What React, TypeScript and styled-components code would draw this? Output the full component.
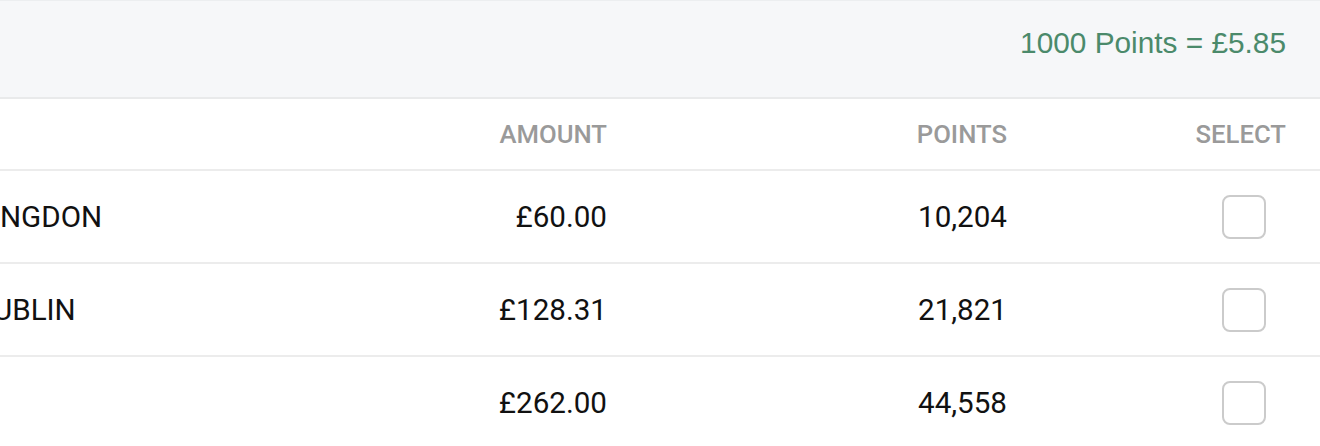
import React from "react";
import styled, { createGlobalStyle } from "styled-components";

const Global = createGlobalStyle`
  html, body { margin: 0; padding: 0; background: #ffffff; }
  body { font-family: Roboto, "Liberation Sans", sans-serif; -webkit-font-smoothing: antialiased; }
`;

const Page = styled.div`
  width: 1320px;
  overflow: hidden;
`;

const RateBar = styled.div`
  display: flex;
  justify-content: flex-end;
  align-items: flex-start;
  height: 72px;
  padding: 24px 34px 0 0;
  background: #f6f7f9;
  border-top: 1px solid #eceef0;
  border-bottom: 2px solid #e9eaeb;
`;

const RateText = styled.span`
  font-family: "Liberation Sans", Arial, sans-serif;
  font-size: 29.8px;
  line-height: 1.2;
  color: #4b8a6b;
`;

const Row = styled.div<{ $height: number }>`
  display: grid;
  grid-template-columns: 307px 300px 400px 279px;
  align-items: center;
  height: ${(p) => p.$height}px;
  padding-right: 34px;
  border-bottom: 2px solid #ececec;
`;

const HeadCell = styled.div`
  font-family: Roboto, sans-serif;
  font-weight: 500;
  font-size: 25.7px;
  color: #9a9a9a;
  text-align: right;
  text-transform: uppercase;
`;

const Cell = styled.div`
  font-family: Roboto, sans-serif;
  font-size: 29.6px;
  color: #111;
  text-align: right;
  white-space: nowrap;
`;

const NameCell = styled(Cell)<{ $indent: number }>`
  text-align: left;
  overflow: hidden;
  text-indent: ${(p) => p.$indent}px;
`;

const SelectCell = styled.div`
  display: flex;
  justify-content: flex-end;
  padding-right: 20px;
`;

const Check = styled.span`
  display: block;
  width: 40px;
  height: 40px;
  border: 2px solid #cbcbcb;
  border-radius: 8px;
  background: #fff;
  cursor: pointer;
`;

const rows = [
  { name: "NGDON", indent: 0, amount: "£60.00", points: "10,204" },
  { name: "UBLIN", indent: -7, amount: "£128.31", points: "21,821" },
  { name: "", indent: 0, amount: "£262.00", points: "44,558" },
];

export default function App() {
  return (
    <Page>
      <Global />
      <RateBar>
        <RateText>1000 Points = £5.85</RateText>
      </RateBar>
      <Row $height={70}>
        <div />
        <HeadCell>Amount</HeadCell>
        <HeadCell>Points</HeadCell>
        <HeadCell>Select</HeadCell>
      </Row>
      {rows.map((r, i) => (
        <Row key={i} $height={91}>
          <NameCell $indent={r.indent}>{r.name}</NameCell>
          <Cell>{r.amount}</Cell>
          <Cell>{r.points}</Cell>
          <SelectCell>
            <Check role="checkbox" aria-checked="false" />
          </SelectCell>
        </Row>
      ))}
    </Page>
  );
}
